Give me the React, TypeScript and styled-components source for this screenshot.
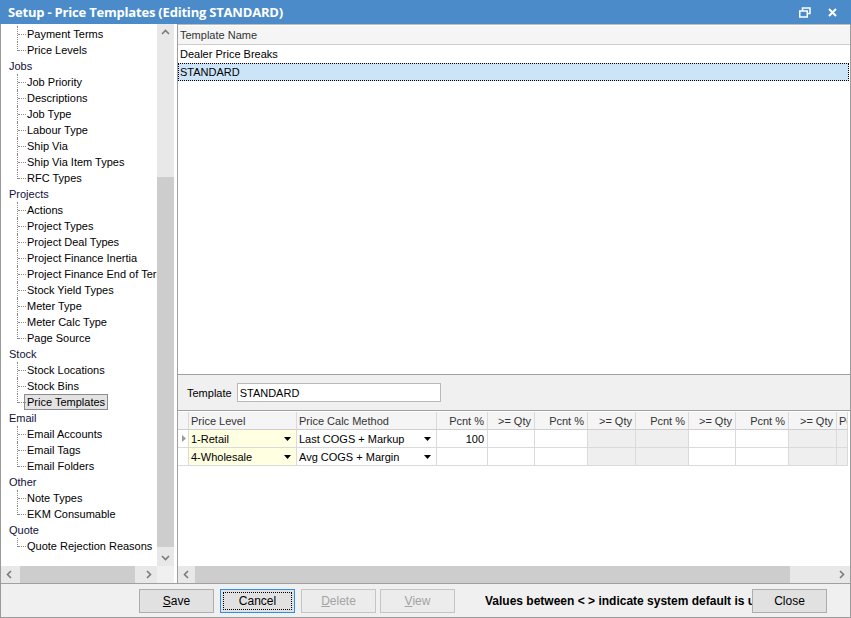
import React, { FunctionComponent } from 'react';
import styled, { createGlobalStyle } from 'styled-components';

const GlobalStyle = createGlobalStyle`
    body {
        margin: 0;
        font-family: "Liberation Sans", Arial, sans-serif;
        font-size: 11px;
        color: #000;
        background: #fff;
    }
`;

interface TreeItem {
    label: string;
    child?: boolean;
    last?: boolean;
    selected?: boolean;
}

const tree: TreeItem[] = [
    { label: 'Payment Terms', child: true },
    { label: 'Price Levels', child: true, last: true },
    { label: 'Jobs' },
    { label: 'Job Priority', child: true },
    { label: 'Descriptions', child: true },
    { label: 'Job Type', child: true },
    { label: 'Labour Type', child: true },
    { label: 'Ship Via', child: true },
    { label: 'Ship Via Item Types', child: true },
    { label: 'RFC Types', child: true, last: true },
    { label: 'Projects' },
    { label: 'Actions', child: true },
    { label: 'Project Types', child: true },
    { label: 'Project Deal Types', child: true },
    { label: 'Project Finance Inertia', child: true },
    { label: 'Project Finance End of Term', child: true },
    { label: 'Stock Yield Types', child: true },
    { label: 'Meter Type', child: true },
    { label: 'Meter Calc Type', child: true },
    { label: 'Page Source', child: true, last: true },
    { label: 'Stock' },
    { label: 'Stock Locations', child: true },
    { label: 'Stock Bins', child: true },
    { label: 'Price Templates', child: true, last: true, selected: true },
    { label: 'Email' },
    { label: 'Email Accounts', child: true },
    { label: 'Email Tags', child: true },
    { label: 'Email Folders', child: true, last: true },
    { label: 'Other' },
    { label: 'Note Types', child: true },
    { label: 'EKM Consumable', child: true, last: true },
    { label: 'Quote' },
    { label: 'Quote Rejection Reasons', child: true, last: true },
];

interface Column {
    title: string;
    width: number;
    right?: boolean;
    shaded?: boolean;
}

const columns: Column[] = [
    { title: '', width: 11 },
    { title: 'Price Level', width: 108 },
    { title: 'Price Calc Method', width: 140 },
    { title: 'Pcnt %', width: 51, right: true },
    { title: '>= Qty', width: 47, right: true },
    { title: 'Pcnt %', width: 53, right: true },
    { title: '>= Qty', width: 48, right: true, shaded: true },
    { title: 'Pcnt %', width: 53, right: true, shaded: true },
    { title: '>= Qty', width: 47, right: true },
    { title: 'Pcnt %', width: 53, right: true },
    { title: '>= Qty', width: 48, right: true, shaded: true },
    { title: 'Pcnt %', width: 11, shaded: true },
];

const rows = [
    { level: '1-Retail', method: 'Last COGS + Markup', pcnt: '100', current: true },
    { level: '4-Wholesale', method: 'Avg COGS + Margin', pcnt: '', current: false },
];

const Window = styled.div`
    width: 851px;
    height: 618px;
    display: flex;
    flex-direction: column;
    overflow: hidden;
`;

const TitleBar = styled.div`
    height: 24px;
    background: #4b8bca;
    display: flex;
    align-items: center;
    padding: 0 14px 0 8px;
    color: #fff;
`;

const Title = styled.div`
    flex: 1;
    font-family: "Open Sans", "Liberation Sans", sans-serif;
    font-weight: 700;
    font-size: 13px;
    letter-spacing: -0.2px;
`;

const TitleIcons = styled.div`
    display: flex;
    align-items: center;
    gap: 17px;
`;

const Body = styled.div`
    flex: 1;
    display: flex;
    flex-direction: column;
    border: 1px solid #9a9a9a;
    border-top: none;
`;

const Main = styled.div`
    height: 559px;
    display: flex;
`;

const LeftPane = styled.div`
    width: 176px;
    display: flex;
    flex-direction: column;
`;

const TreeRow = styled.div`
    flex: 1;
    display: flex;
    min-height: 0;
`;

const TreeList = styled.div`
    width: 156px;
    padding-top: 2px;
    overflow: hidden;
    white-space: nowrap;
`;

const Node = styled.div`
    height: 16px;
    display: flex;
    align-items: center;
`;

const Indent = styled.div<{ $w: number }>`
    width: ${(p) => p.$w}px;
    flex: none;
`;

const Branch = styled.div<{ $last: boolean }>`
    width: 7px;
    height: 16px;
    flex: none;
    position: relative;
    &::before {
        content: '';
        position: absolute;
        left: 0;
        top: 0;
        height: ${(p) => (p.$last ? '9px' : '16px')};
        border-left: 1px dotted #8a8a8a;
    }
    &::after {
        content: '';
        position: absolute;
        left: 1px;
        top: 8px;
        width: 8px;
        border-top: 1px dotted #8a8a8a;
    }
`;

const Label = styled.span<{ $selected?: boolean; $parent?: boolean }>`
    padding: 0 2px;
    line-height: 14px;
    border: 1px solid ${(p) => (p.$selected ? '#8c8c8c' : 'transparent')};
    background: ${(p) => (p.$selected ? '#e3e3e3' : 'transparent')};
    color: ${(p) => (p.$parent ? '#10103a' : '#000')};
`;

const VScroll = styled.div`
    width: 17px;
    display: flex;
    flex-direction: column;
    background: #e8e8e8;
`;

const Arrow = styled.div`
    height: 17px;
    width: 17px;
    flex: none;
    display: flex;
    align-items: center;
    justify-content: center;
`;

const Track = styled.div<{ $before: number; $size: number }>`
    flex: 1;
    position: relative;
    &::after {
        content: '';
        position: absolute;
        background: #cdcdcd;
        left: 0;
        right: 0;
        top: ${(p) => p.$before}px;
        height: ${(p) => p.$size}px;
    }
`;

const HTrack = styled.div<{ $before: number; $size: number }>`
    flex: 1;
    position: relative;
    &::after {
        content: '';
        position: absolute;
        background: #cdcdcd;
        top: 0;
        bottom: 0;
        left: ${(p) => p.$before}px;
        width: ${(p) => p.$size}px;
    }
`;

const Gutter = styled.div`
    width: 3px;
    background: #fff;
`;

const HScrollRow = styled.div`
    height: 17px;
    display: flex;
`;

const HScroll = styled.div<{ $w?: number }>`
    ${(p) => (p.$w ? `width: ${p.$w}px;` : 'flex: 1;')}
    display: flex;
    background: #e8e8e8;
`;

const Corner = styled.div`
    width: 17px;
    background: #f0f0f0;
`;

const RightPane = styled.div`
    flex: 1;
    display: flex;
    flex-direction: column;
    border-left: 1px solid #a0a0a0;
    min-width: 0;
`;

const TopGrid = styled.div`
    flex: 1;
    border-top: 1px solid #bcbcbc;
    border-bottom: 1px solid #a0a0a0;
    background: #fff;
    padding-top: 1px;
`;

const GridHead = styled.div`
    height: 18px;
    background: #f5f5f5;
    border-bottom: 1px solid #cfcfcf;
    display: flex;
    align-items: center;
    padding-left: 2px;
    color: #333;
`;

const TopRow = styled.div<{ $selected?: boolean }>`
    height: 18px;
    display: flex;
    align-items: center;
    padding-left: 1px;
    margin-right: 1px;
    background: ${(p) => (p.$selected ? '#cce4f7' : '#fff')};
    border: 1px ${(p) => (p.$selected ? 'dotted #000' : 'solid transparent')};
    box-sizing: border-box;
`;

const TemplatePanel = styled.div`
    height: 35px;
    background: #f0f0f0;
    border-bottom: 1px solid #a0a0a0;
    display: flex;
    align-items: center;
    padding-left: 9px;
    gap: 5px;
`;

const Input = styled.div`
    width: 204px;
    height: 19px;
    box-sizing: border-box;
    background: #fff;
    border: 1px solid #b9b9b9;
    display: flex;
    align-items: center;
    padding-left: 2px;
`;

const BottomGrid = styled.div`
    height: 172px;
    display: flex;
    flex-direction: column;
    background: #fff;
`;

const GridBody = styled.div`
    flex: 1;
    overflow: hidden;
    padding-top: 1px;
`;

const CellRow = styled.div`
    display: flex;
    width: 670px;
`;

const HeadCell = styled.div<{ $w: number; $right?: boolean }>`
    width: ${(p) => p.$w}px;
    height: 18px;
    flex: none;
    box-sizing: border-box;
    background: #f5f5f5;
    border-right: 1px solid #dadada;
    border-bottom: 1px solid #cfcfcf;
    color: #333;
    display: flex;
    align-items: center;
    justify-content: ${(p) => (p.$right ? 'flex-end' : 'flex-start')};
    padding: 0 3px 0 2px;
    overflow: hidden;
    white-space: nowrap;
`;

const Cell = styled.div<{ $w: number; $bg: string; $right?: boolean }>`
    width: ${(p) => p.$w}px;
    height: 18px;
    flex: none;
    box-sizing: border-box;
    background: ${(p) => p.$bg};
    border-right: 1px solid #dadada;
    border-bottom: 1px solid #dadada;
    display: flex;
    align-items: center;
    justify-content: ${(p) => (p.$right ? 'flex-end' : 'space-between')};
    padding: 0 3px 0 2px;
    overflow: hidden;
    white-space: nowrap;
`;

const DropIcon = styled.svg`
    margin-right: 2px;
    flex: none;
`;

const RowMarker = styled.svg`
    margin-left: 2px;
    flex: none;
`;

const Footer = styled.div`
    flex: 1;
    background: #f0f0f0;
    border-top: 1px solid #a0a0a0;
    display: flex;
    align-items: center;
    padding-left: 138px;
`;

const Button = styled.div<{ $disabled?: boolean; $focused?: boolean; $gap?: number }>`
    width: 75px;
    height: 24px;
    flex: none;
    box-sizing: border-box;
    margin-right: ${(p) => p.$gap ?? 6}px;
    background: ${(p) => (p.$disabled ? '#ececec' : '#e1e1e1')};
    border: 1px solid ${(p) => (p.$focused ? '#2f8ee6' : p.$disabled ? '#c4c4c4' : '#adadad')};
    color: ${(p) => (p.$disabled ? '#a3a3a3' : '#000')};
    font-size: 12px;
    display: flex;
    align-items: center;
    justify-content: center;
    position: relative;
    ${(p) => (p.$focused ? `&::after { content: ''; position: absolute; inset: 2px; border: 1px dotted #000; }` : '')}
`;

const Message = styled.div`
    width: 267px;
    flex: none;
    margin-left: 30px;
    overflow: hidden;
    white-space: nowrap;
    font-weight: 700;
    font-size: 12px;
`;

const Chevron: FunctionComponent<{ dir: 'up' | 'down' | 'left' | 'right' }> = ({ dir }) => {
    const pts = {
        up: '1,6 4.5,2.5 8,6',
        down: '1,3 4.5,6.5 8,3',
        left: '6,1 2.5,4.5 6,8',
        right: '3,1 6.5,4.5 3,8',
    }[dir];
    return (
        <svg width="9" height="9" viewBox="0 0 9 9">
            <polyline points={pts} fill="none" stroke="#7a7a7a" strokeWidth="1.6" />
        </svg>
    );
};

const DropArrow = () => (
    <DropIcon width="7" height="4" viewBox="0 0 7 4">
        <polygon points="0,0 7,0 3.5,4" fill="#000" />
    </DropIcon>
);

const App = () => (
    <Window>
        <GlobalStyle />
        <TitleBar>
            <Title>Setup - Price Templates (Editing STANDARD)</Title>
            <TitleIcons>
                <svg width="12" height="11" viewBox="0 0 12 11">
                    <rect x="3.5" y="1" width="7.5" height="5.5" fill="none" stroke="#fff" strokeWidth="1.5" />
                    <rect x="0.75" y="4" width="7.5" height="6" fill="#4b8bca" stroke="#fff" strokeWidth="1.5" />
                </svg>
                <svg width="9" height="9" viewBox="0 0 9 9">
                    <path d="M1 1 L8 8 M8 1 L1 8" stroke="#fff" strokeWidth="2" />
                </svg>
            </TitleIcons>
        </TitleBar>
        <Body>
            <Main>
                <LeftPane>
                    <TreeRow>
                        <TreeList>
                            {tree.map((t) =>
                                t.child ? (
                                    <Node key={t.label}>
                                        <Indent $w={16} />
                                        <Branch $last={!!t.last} />
                                        <Label $selected={t.selected}>{t.label}</Label>
                                    </Node>
                                ) : (
                                    <Node key={t.label}>
                                        <Indent $w={5} />
                                        <Label $parent>{t.label}</Label>
                                    </Node>
                                )
                            )}
                        </TreeList>
                        <VScroll>
                            <Arrow><Chevron dir="up" /></Arrow>
                            <Track $before={136} $size={370} />
                            <Arrow><Chevron dir="down" /></Arrow>
                        </VScroll>
                        <Gutter />
                    </TreeRow>
                    <HScrollRow>
                        <HScroll $w={156}>
                            <Arrow><Chevron dir="left" /></Arrow>
                            <HTrack $before={2} $size={115} />
                            <Arrow><Chevron dir="right" /></Arrow>
                        </HScroll>
                        <Corner />
                        <Gutter />
                    </HScrollRow>
                </LeftPane>
                <RightPane>
                    <TopGrid>
                        <GridHead>Template Name</GridHead>
                        <TopRow>Dealer Price Breaks</TopRow>
                        <TopRow $selected>STANDARD</TopRow>
                    </TopGrid>
                    <TemplatePanel>
                        <span>Template</span>
                        <Input>STANDARD</Input>
                    </TemplatePanel>
                    <BottomGrid>
                        <GridBody>
                            <CellRow>
                                {columns.map((c, i) => (
                                    <HeadCell key={i} $w={c.width} $right={c.right}>{c.title}</HeadCell>
                                ))}
                            </CellRow>
                            {rows.map((r) => (
                                <CellRow key={r.level}>
                                    {columns.map((c, i) => {
                                        if (i === 0) {
                                            return (
                                                <Cell key={i} $w={c.width} $bg="#fff">
                                                    {r.current && (
                                                        <RowMarker width="4" height="7" viewBox="0 0 4 7">
                                                            <polygon points="0,0 4,3.5 0,7" fill="#9a9a9a" />
                                                        </RowMarker>
                                                    )}
                                                </Cell>
                                            );
                                        }
                                        if (i === 1) {
                                            return (
                                                <Cell key={i} $w={c.width} $bg="#ffffe1">
                                                    <span>{r.level}</span>
                                                    <DropArrow />
                                                </Cell>
                                            );
                                        }
                                        if (i === 2) {
                                            return (
                                                <Cell key={i} $w={c.width} $bg="#fff">
                                                    <span>{r.method}</span>
                                                    <DropArrow />
                                                </Cell>
                                            );
                                        }
                                        return (
                                            <Cell key={i} $w={c.width} $bg={c.shaded ? '#efefef' : '#fff'} $right>
                                                {i === 3 ? r.pcnt : ''}
                                            </Cell>
                                        );
                                    })}
                                </CellRow>
                            ))}
                        </GridBody>
                        <HScrollRow>
                            <HScroll>
                                <Arrow><Chevron dir="left" /></Arrow>
                                <HTrack $before={0} $size={595} />
                                <Arrow><Chevron dir="right" /></Arrow>
                            </HScroll>
                        </HScrollRow>
                    </BottomGrid>
                </RightPane>
            </Main>
            <Footer>
                <Button><span><u>S</u>ave</span></Button>
                <Button $focused>Cancel</Button>
                <Button $disabled $gap={4}><span><u>D</u>elete</span></Button>
                <Button $disabled $gap={0}><span><u>V</u>iew</span></Button>
                <Message>Values between &lt; &gt; indicate system default is used</Message>
                <Button>Close</Button>
            </Footer>
        </Body>
    </Window>
);

export default App;
